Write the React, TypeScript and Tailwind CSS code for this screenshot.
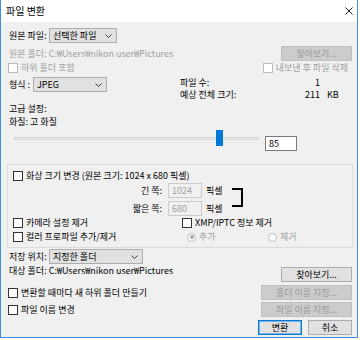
import React from "react";

function Chevron() {
  return (
    <svg width="7" height="4" viewBox="0 0 7 4" className="shrink-0">
      <path d="M0.5 0.5 L3.5 3.5 L6.5 0.5" fill="none" stroke="#3a3a3a" strokeWidth="1" />
    </svg>
  );
}

function Dropdown({ text, w }: { text: string; w: string }) {
  return (
    <div className={`${w} h-[15px] border border-[#adadad] bg-[#e1e1e1] flex items-center justify-between pl-[3px] pr-[4px]`}>
      <span>{text}</span>
      <Chevron />
    </div>
  );
}

function Check({ disabled }: { disabled?: boolean }) {
  return (
    <div
      className={`w-[10px] h-[10px] shrink-0 bg-white border ${
        disabled ? "border-[#bcbcbc]" : "border-[#333333]"
      }`}
    />
  );
}

function Radio({ checked }: { checked?: boolean }) {
  return (
    <div className="w-[9px] h-[9px] shrink-0 rounded-full border border-[#bcbcbc] bg-white flex items-center justify-center">
      {checked && <div className="w-[4px] h-[4px] rounded-full bg-[#a8a8a8]" />}
    </div>
  );
}

function Btn({
  text,
  w,
  disabled,
  primary,
}: {
  text: string;
  w: string;
  disabled?: boolean;
  primary?: boolean;
}) {
  const cls = disabled
    ? "bg-[#cccccc] border-[#bfbfbf] text-[#9a9a9a]"
    : primary
    ? "bg-[#e1e1e1] border-[#0078d7] shadow-[inset_0_0_0_1px_#7fb3e3] text-black"
    : "bg-[#e1e1e1] border-[#adadad] text-black";
  return (
    <div className={`${w} h-[15px] border flex items-center justify-center shrink-0 ${cls}`}>
      {text}
    </div>
  );
}

export default function App() {
  return (
    <div className="w-[360px] h-[340px] bg-white font-['Noto_Sans_CJK_KR','Noto_Sans',sans-serif] text-[9px] leading-[12px] text-black">
      <div className="w-[358px] h-[338px] border-x border-b border-[#3d8ee0] flex flex-col">
        {/* Title bar */}
        <div className="h-[22px] shrink-0 bg-white flex items-center justify-between pl-[5px] pr-[4px]">
          <span className="text-[10px]">파일 변환</span>
          <svg width="8" height="8" viewBox="0 0 8 8">
            <path d="M0.5 0.5 L7.5 7.5 M7.5 0.5 L0.5 7.5" stroke="#222" strokeWidth="1" />
          </svg>
        </div>

        {/* Body */}
        <div className="flex-1 bg-[#f0f0f0] pl-[8px] pr-[5px] flex flex-col">
          {/* 원본 파일 */}
          <div className="mt-[6px] h-[15px] flex items-center">
            <span className="w-[40px]">원본 파일:</span>
            <Dropdown text="선택한 파일" w="w-[68px]" />
          </div>

          {/* 원본 폴더 */}
          <div className="mt-[3px] h-[15px] flex items-center justify-between">
            <span className="text-[#a0a0a0]">원본 폴더: C:₩Users₩nikon user₩Pictures</span>
            <Btn text="찾아보기..." w="w-[71px]" disabled />
          </div>

          {/* 하위 폴더 포함 / 내보낸 후 */}
          <div className="mt-[2px] h-[10px] flex items-center justify-between">
            <div className="flex items-center gap-[3px] -ml-[1px] text-[#a0a0a0]">
              <Check disabled />
              <span>하위 폴더 포함</span>
            </div>
            <div className="flex items-center gap-[3px] mr-[4px] text-[#a0a0a0]">
              <Check disabled />
              <span>내보낸 후 파일 삭제</span>
            </div>
          </div>

          {/* 형식 / 파일 수 */}
          <div className="mt-[4px] flex">
            <div className="w-[171px] h-[15px] flex items-center">
              <span className="w-[24px]">형식 :</span>
              <Dropdown text="JPEG" w="w-[74px]" />
            </div>
            <div className="flex flex-col">
              <div className="h-[12px] flex">
                <span className="w-[135px]">파일 수:</span>
                <span>1</span>
              </div>
              <div className="h-[12px] flex">
                <span className="w-[125px]">예상 전체 크기:</span>
                <span className="w-[22px]">211</span>
                <span>KB</span>
              </div>
            </div>
          </div>

          <div className="mt-[2px] h-[12px]">고급 설정:</div>
          <div className="mt-[1px] h-[12px]">화질: 고 화질</div>

          {/* Slider */}
          <div className="mt-[2px] flex items-start">
            <div className="ml-[5px] w-[245px] h-[16px] relative">
              <div className="mt-[7px] h-[3px] bg-[#e7eaea] border border-[#d6d6d6]" />
              <div className="absolute left-[202px] top-0 w-[7px] h-[16px] bg-[#0078d7]" />
            </div>
            <div className="ml-[6px] mt-[6px] w-[32px] h-[15px] bg-white border border-[#7a7a7a] flex items-center pl-[3px]">
              85
            </div>
          </div>

          {/* Group box */}
          <div className="mt-[13px] -ml-[2px] -mr-[1px] h-[84px] border border-[#dcdcdc] pl-[5px] pt-[6px] flex flex-col">
            <div className="h-[10px] flex items-center gap-[3px]">
              <Check />
              <span>화상 크기 변경 (원본 크기: 1024 x 680 픽셀)</span>
            </div>

            <div className="mt-[2px] flex">
              <div className="flex flex-col gap-[3px]">
                <div className="h-[15px] flex items-center">
                  <span className="w-[149px] text-right">긴 쪽:</span>
                  <div className="ml-[6px] w-[34px] h-[15px] border border-[#cccccc] bg-[#f0f0f0] text-[#a0a0a0] flex items-center pl-[3px]">
                    1024
                  </div>
                  <span className="ml-[4px] w-[18px]">픽셀</span>
                </div>
                <div className="h-[15px] flex items-center">
                  <span className="w-[149px] text-right">짧은 쪽:</span>
                  <div className="ml-[6px] w-[34px] h-[15px] border border-[#cccccc] bg-[#f0f0f0] text-[#a0a0a0] flex items-center pl-[3px]">
                    680
                  </div>
                  <span className="ml-[4px] w-[18px]">픽셀</span>
                </div>
              </div>
              <div className="ml-[8px] mt-[5px] w-[11px] h-[19px] border-t-2 border-r-2 border-b-2 border-black" />
            </div>

            <div className="mt-[2px] h-[10px] flex items-center">
              <div className="w-[169px] flex items-center gap-[3px]">
                <Check />
                <span>카메라 설정 제거</span>
              </div>
              <div className="flex items-center gap-[3px]">
                <Check />
                <span>XMP/IPTC 정보 제거</span>
              </div>
            </div>

            <div className="mt-[4px] h-[10px] flex items-center">
              <div className="w-[169px] flex items-center gap-[3px]">
                <Check />
                <span>컬러 프로파일 추가/제거</span>
              </div>
              <div className="ml-[5px] w-[81px] flex items-center gap-[3px] text-[#a0a0a0]">
                <Radio checked />
                <span>추가</span>
              </div>
              <div className="flex items-center gap-[3px] text-[#a0a0a0]">
                <Radio />
                <span>제거</span>
              </div>
            </div>
          </div>

          {/* 저장 위치 */}
          <div className="mt-[1px] h-[15px] flex items-center">
            <span className="w-[40px]">저장 위치:</span>
            <Dropdown text="지정한 폴더" w="w-[94px]" />
          </div>

          <div className="mt-[1px] flex items-start justify-between">
            <span className="h-[12px]">대상 폴더: C:₩Users₩nikon user₩Pictures</span>
            <div className="mt-[2px]">
              <Btn text="찾아보기..." w="w-[71px]" />
            </div>
          </div>

          <div className="mt-[3px] h-[15px] flex items-center justify-between">
            <div className="flex items-center gap-[3px] -ml-[1px]">
              <Check />
              <span>변환할 때마다 새 하위 폴더 만들기</span>
            </div>
            <Btn text="폴더 이름 지정..." w="w-[91px]" disabled />
          </div>

          <div className="mt-[2px] h-[15px] flex items-center justify-between">
            <div className="flex items-center gap-[3px] -ml-[1px]">
              <Check />
              <span>파일 이름 변경</span>
            </div>
            <Btn text="파일 이름 지정..." w="w-[91px]" disabled />
          </div>

          <div className="mt-[3px] flex justify-end gap-[6px]">
            <Btn text="변환" w="w-[44px]" primary />
            <Btn text="취소" w="w-[44px]" />
          </div>
        </div>
      </div>
    </div>
  );
}
